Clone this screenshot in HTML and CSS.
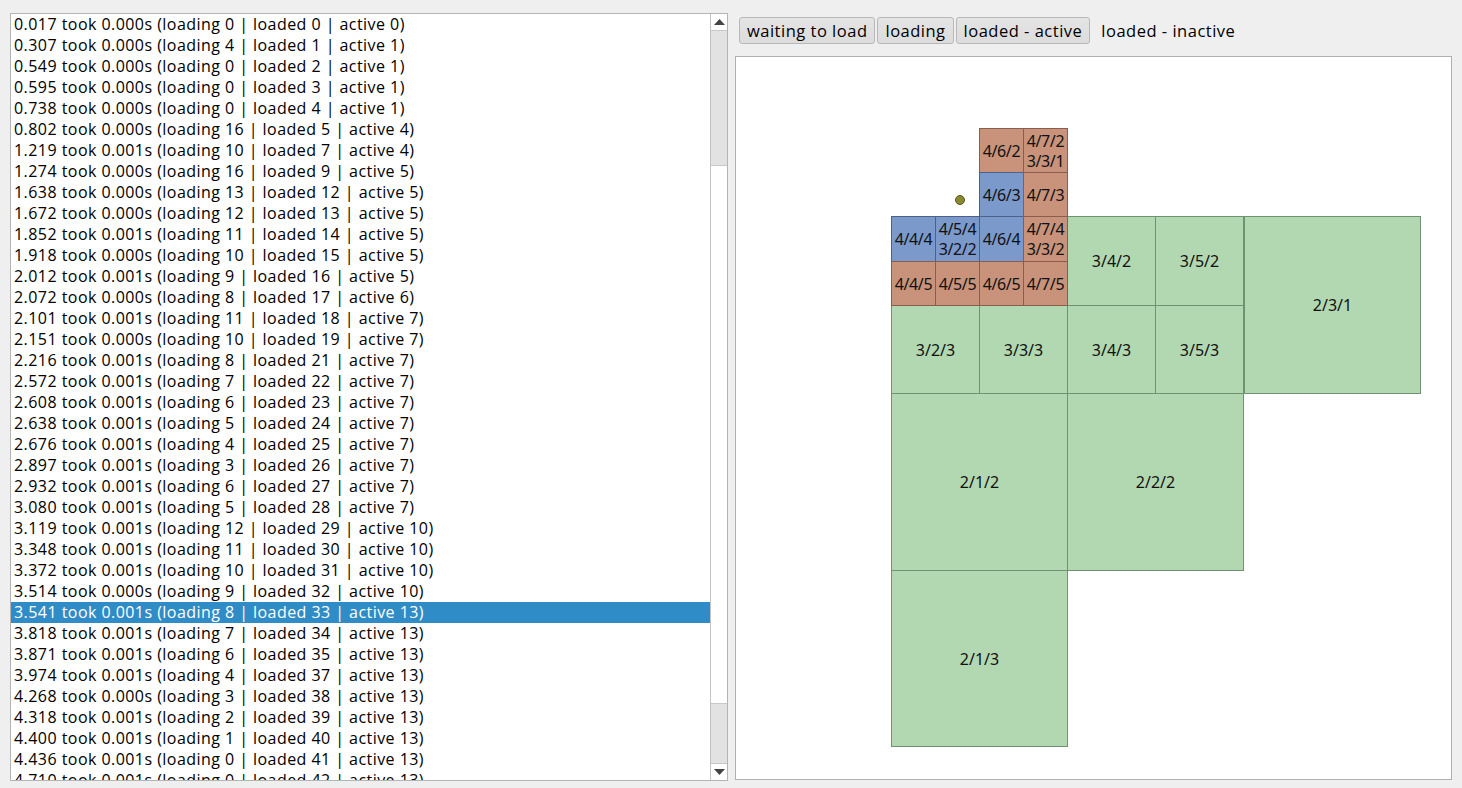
FILE: index.html
```html
<!DOCTYPE html>
<html>
<head>
<meta charset="utf-8">
<link rel="stylesheet" href="styles.css">
</head>
<body>
<div class="app">
  <div class="listbox">
    <div class="rows">
      <div class="row">0.017 took 0.000s (loading 0 | loaded 0 | active 0)</div>
      <div class="row">0.307 took 0.000s (loading 4 | loaded 1 | active 1)</div>
      <div class="row">0.549 took 0.000s (loading 0 | loaded 2 | active 1)</div>
      <div class="row">0.595 took 0.000s (loading 0 | loaded 3 | active 1)</div>
      <div class="row">0.738 took 0.000s (loading 0 | loaded 4 | active 1)</div>
      <div class="row">0.802 took 0.000s (loading 16 | loaded 5 | active 4)</div>
      <div class="row">1.219 took 0.001s (loading 10 | loaded 7 | active 4)</div>
      <div class="row">1.274 took 0.000s (loading 16 | loaded 9 | active 5)</div>
      <div class="row">1.638 took 0.000s (loading 13 | loaded 12 | active 5)</div>
      <div class="row">1.672 took 0.000s (loading 12 | loaded 13 | active 5)</div>
      <div class="row">1.852 took 0.001s (loading 11 | loaded 14 | active 5)</div>
      <div class="row">1.918 took 0.000s (loading 10 | loaded 15 | active 5)</div>
      <div class="row">2.012 took 0.001s (loading 9 | loaded 16 | active 5)</div>
      <div class="row">2.072 took 0.000s (loading 8 | loaded 17 | active 6)</div>
      <div class="row">2.101 took 0.001s (loading 11 | loaded 18 | active 7)</div>
      <div class="row">2.151 took 0.000s (loading 10 | loaded 19 | active 7)</div>
      <div class="row">2.216 took 0.001s (loading 8 | loaded 21 | active 7)</div>
      <div class="row">2.572 took 0.001s (loading 7 | loaded 22 | active 7)</div>
      <div class="row">2.608 took 0.001s (loading 6 | loaded 23 | active 7)</div>
      <div class="row">2.638 took 0.001s (loading 5 | loaded 24 | active 7)</div>
      <div class="row">2.676 took 0.001s (loading 4 | loaded 25 | active 7)</div>
      <div class="row">2.897 took 0.001s (loading 3 | loaded 26 | active 7)</div>
      <div class="row">2.932 took 0.001s (loading 6 | loaded 27 | active 7)</div>
      <div class="row">3.080 took 0.001s (loading 5 | loaded 28 | active 7)</div>
      <div class="row">3.119 took 0.001s (loading 12 | loaded 29 | active 10)</div>
      <div class="row">3.348 took 0.001s (loading 11 | loaded 30 | active 10)</div>
      <div class="row">3.372 took 0.001s (loading 10 | loaded 31 | active 10)</div>
      <div class="row">3.514 took 0.000s (loading 9 | loaded 32 | active 10)</div>
      <div class="row selected">3.541 took 0.001s (loading 8 | loaded 33 | active 13)</div>
      <div class="row">3.818 took 0.001s (loading 7 | loaded 34 | active 13)</div>
      <div class="row">3.871 took 0.001s (loading 6 | loaded 35 | active 13)</div>
      <div class="row">3.974 took 0.001s (loading 4 | loaded 37 | active 13)</div>
      <div class="row">4.268 took 0.000s (loading 3 | loaded 38 | active 13)</div>
      <div class="row">4.318 took 0.001s (loading 2 | loaded 39 | active 13)</div>
      <div class="row">4.400 took 0.001s (loading 1 | loaded 40 | active 13)</div>
      <div class="row">4.436 took 0.001s (loading 0 | loaded 41 | active 13)</div>
      <div class="row">4.710 took 0.001s (loading 0 | loaded 42 | active 13)</div>
    </div>
    <div class="scrollbar">
      <div class="sb-btn"><svg width="11" height="6" viewBox="0 0 11 6"><polygon points="0,6 11,6 5.5,0" fill="#444"/></svg></div>
      <div class="sb-thumb"></div>
      <div class="sb-track"></div>
      <div class="sb-page"></div>
      <div class="sb-btn sb-btn-down"><svg width="11" height="6" viewBox="0 0 11 6"><polygon points="0,0 11,0 5.5,6" fill="#444"/></svg></div>
    </div>
  </div>
  <div class="right">
    <div class="legend">
      <div class="btn">waiting to load</div>
      <div class="btn">loading</div>
      <div class="btn">loaded - active</div>
      <div class="plain">loaded - inactive</div>
    </div>
    <div class="canvas">
      <div class="tile green" style="left:155px;top:336px;width:177px;height:178px">2/1/2</div>
      <div class="tile green" style="left:331px;top:336px;width:177px;height:178px">2/2/2</div>
      <div class="tile green" style="left:155px;top:513px;width:177px;height:177px">2/1/3</div>
      <div class="tile green" style="left:508px;top:159px;width:177px;height:178px">2/3/1</div>
      <div class="tile green" style="left:155px;top:248px;width:89px;height:89px">3/2/3</div>
      <div class="tile green" style="left:243px;top:248px;width:89px;height:89px">3/3/3</div>
      <div class="tile green" style="left:331px;top:248px;width:89px;height:89px">3/4/3</div>
      <div class="tile green" style="left:419px;top:248px;width:89px;height:89px">3/5/3</div>
      <div class="tile green" style="left:331px;top:159px;width:89px;height:90px">3/4/2</div>
      <div class="tile green" style="left:419px;top:159px;width:89px;height:90px">3/5/2</div>

      <div class="tile orange" style="left:243px;top:71px;width:45px;height:45px">4/6/2</div>
      <div class="tile orange two" style="left:287px;top:71px;width:45px;height:45px">4/7/2<br>3/3/1</div>
      <div class="tile blue" style="left:243px;top:115px;width:45px;height:45px">4/6/3</div>
      <div class="tile orange" style="left:287px;top:115px;width:45px;height:45px">4/7/3</div>
      <div class="tile blue" style="left:155px;top:159px;width:45px;height:46px">4/4/4</div>
      <div class="tile blue two" style="left:199px;top:159px;width:45px;height:46px">4/5/4<br>3/2/2</div>
      <div class="tile blue" style="left:243px;top:159px;width:45px;height:46px">4/6/4</div>
      <div class="tile orange two" style="left:287px;top:159px;width:45px;height:46px">4/7/4<br>3/3/2</div>
      <div class="tile orange" style="left:155px;top:204px;width:45px;height:45px">4/4/5</div>
      <div class="tile orange" style="left:199px;top:204px;width:45px;height:45px">4/5/5</div>
      <div class="tile orange" style="left:243px;top:204px;width:45px;height:45px">4/6/5</div>
      <div class="tile orange" style="left:287px;top:204px;width:45px;height:45px">4/7/5</div>
      <div class="dot" style="left:219px;top:138px"></div>
    </div>
  </div>
</div>
</body>
</html>
```
FILE: styles.css
```css
html, body {
  margin: 0;
  padding: 0;
  background: #efefef;
  width: 1462px;
  height: 788px;
  overflow: hidden;
  font-family: "Open Sans", "Noto Sans", sans-serif;
}
.app {
  display: flex;
  padding: 13px 10px 0 10px;
  gap: 7px;
}
.listbox {
  width: 716px;
  height: 766px;
  border: 1px solid #b4b4b4;
  background: #fff;
  display: flex;
  overflow: hidden;
}
.rows {
  flex: 1;
  overflow: hidden;
}
.row {
  height: 21px;
  line-height: 21px;
  padding-left: 3px;
  font-size: 16px;
  letter-spacing: 0.45px;
  color: #000;
  white-space: nowrap;
}
.row.selected {
  background: #308cc6;
  color: #fff;
}
.scrollbar {
  width: 16px;
  border-left: 1px solid #c4c4c4;
  display: flex;
  flex-direction: column;
  background: #fff;
}
.sb-btn {
  height: 16px;
  border-bottom: 1px solid #c8c8c8;
  display: flex;
  align-items: center;
  justify-content: center;
  background: #fff;
}
.sb-btn-down {
  border-bottom: none;
  border-top: 1px solid #c8c8c8;
}
.sb-thumb {
  height: 134px;
  background: #e2e2e2;
  border-bottom: 1px solid #c8c8c8;
}
.sb-track {
  flex: 1;
  background: #fff;
}
.sb-page {
  height: 59px;
  background: #e2e2e2;
  border-top: 1px solid #c8c8c8;
}
.right {
  flex: 1;
  display: flex;
  flex-direction: column;
  gap: 12px;
}
.legend {
  display: flex;
  align-items: center;
  gap: 2px;
  height: 28px;
  margin-top: 3px;
  padding-left: 4px;
}
.btn {
  height: 25px;
  line-height: 25px;
  padding: 0 7px;
  border: 1px solid #b8b8b8;
  border-radius: 3px;
  background: linear-gradient(#e4e4e4, #dcdcdc);
  font-size: 16.5px;
  letter-spacing: 0.5px;
  color: #000;
  white-space: nowrap;
}
.plain {
  padding-left: 9px;
  font-size: 16.5px;
  letter-spacing: 0.5px;
  color: #000;
}
.canvas {
  position: relative;
  width: 715px;
  height: 722px;
  border: 1px solid #b0b0b0;
  background: #fff;
  overflow: hidden;
}
.tile {
  position: absolute;
  box-sizing: border-box;
  border: 1px solid rgba(60, 80, 60, 0.55);
  display: flex;
  align-items: center;
  justify-content: center;
  text-align: center;
  font-family: "Noto Sans", "Open Sans", sans-serif;
  font-size: 16px;
  color: #111;
  line-height: 18px;
  white-space: nowrap;
}
.green {
  background: #b2d8b2;
  border-color: rgba(70, 100, 70, 0.6);
}
.orange {
  background: #c8937a;
  border-color: rgba(90, 50, 40, 0.55);
  letter-spacing: -0.4px;
}
.blue {
  background: #7b99cb;
  border-color: rgba(40, 50, 90, 0.55);
  letter-spacing: -0.4px;
}
.two {
  line-height: 20px;
}
.dot {
  position: absolute;
  width: 10px;
  height: 10px;
  box-sizing: border-box;
  border-radius: 50%;
  background: #878a30;
  border: 1px solid #555820;
}
```
